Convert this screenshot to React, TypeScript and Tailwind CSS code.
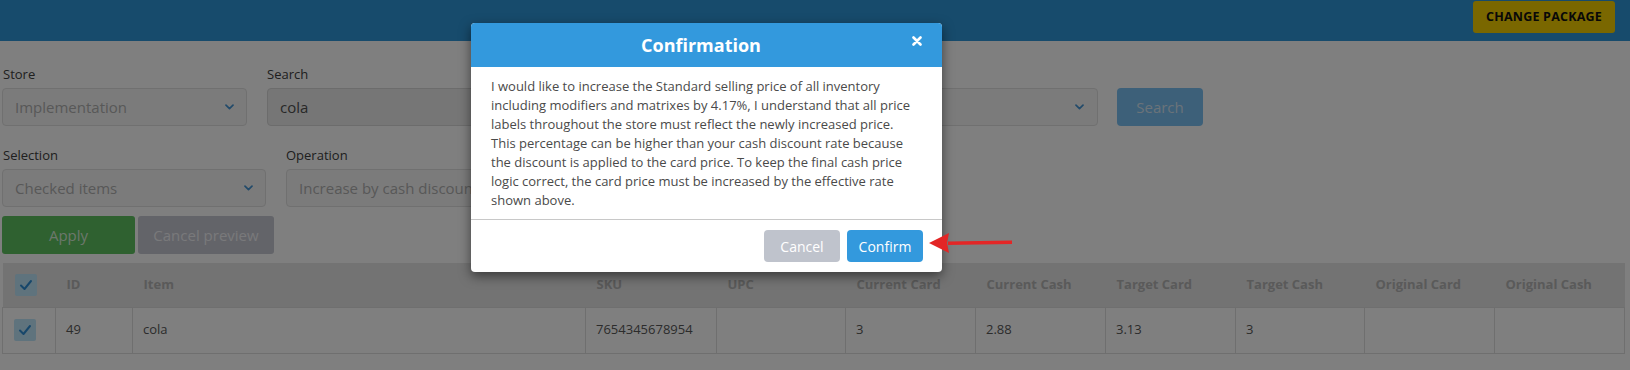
import React from "react";

const font = { fontFamily: '"Open Sans", "Noto Sans", sans-serif' };

function Chevron() {
  return (
    <svg width="9" height="6" viewBox="0 0 9 6" className="shrink-0">
      <path d="M1 1.2 L4.5 4.6 L8 1.2" fill="none" stroke="#4595d4" strokeWidth="1.7" strokeLinecap="round" strokeLinejoin="round" />
    </svg>
  );
}

function Check() {
  return (
    <span className="flex h-[22px] w-[22px] items-center justify-center rounded-[2px] bg-[#bfe6fa]">
      <svg width="14" height="12" viewBox="0 0 14 12">
        <path d="M2 6.5 L5.5 10 L12 2" fill="none" stroke="#2f8fd6" strokeWidth="2" strokeLinecap="round" strokeLinejoin="round" />
      </svg>
    </span>
  );
}

const cols = [53, 77, 453, 131, 129, 130, 130, 130, 129, 130, 130];
const heads = ["", "ID", "Item", "SKU", "UPC", "Current Card", "Current Cash", "Target Card", "Target Cash", "Original Card", "Original Cash"];
const row = ["", "49", "cola", "7654345678954", "", "3", "2.88", "3.13", "3", "", ""];

export default function App() {
  return (
    <div className="relative h-[370px] w-[1630px] overflow-hidden bg-white" style={font}>
      {/* top bar */}
      <div className="flex h-[41px] items-start justify-end bg-[#2e96d8] pr-[15px] pt-[1px]">
        <button className="h-[32px] w-[142px] rounded-[3px] bg-[#f4ce00] text-[12.5px] font-bold tracking-[0.2px] text-[#111]">
          CHANGE PACKAGE
        </button>
      </div>

      <div className="pl-[2px] pr-[6px] pt-[23px]">
        {/* row 1 */}
        <div className="flex items-end gap-[20px]">
          <div className="flex w-[245px] flex-col gap-[4px]">
            <label className="h-[20px] pl-[1px] text-[13px] leading-[20px] text-[#404040]">Store</label>
            <div className="flex h-[38px] items-center justify-between rounded-[4px] border border-[#e0e0e0] bg-[#f7f7f7] pl-[12px] pr-[12px]">
              <span className="text-[15px] text-[#b0b0b0]">Implementation</span>
              <Chevron />
            </div>
          </div>
          <div className="flex w-[420px] flex-col gap-[4px]">
            <label className="h-[20px] text-[13px] leading-[20px] text-[#404040]">Search</label>
            <div className="flex h-[38px] items-center rounded-[4px] border border-[#d8d8d8] bg-[#ececec] pl-[12px]">
              <span className="text-[15px] text-[#505050]">cola</span>
            </div>
          </div>
          <div className="flex w-[391px] flex-col">
            <div className="flex h-[38px] items-center justify-end rounded-[4px] border border-[#e0e0e0] bg-[#f7f7f7] pr-[13px]">
              <Chevron />
            </div>
          </div>
          <button className="ml-[-1px] h-[38px] w-[86px] rounded-[4px] bg-[#7ac0f2] text-[15px] text-[#d6e6f2]">Search</button>
        </div>

        {/* row 2 */}
        <div className="mt-[19px] flex items-end gap-[20px]">
          <div className="flex w-[264px] flex-col gap-[4px]">
            <label className="h-[20px] pl-[1px] text-[13px] leading-[20px] text-[#404040]">Selection</label>
            <div className="flex h-[38px] items-center justify-between rounded-[4px] border border-[#e0e0e0] bg-[#f7f7f7] pl-[12px] pr-[12px]">
              <span className="text-[15px] text-[#b0b0b0]">Checked items</span>
              <Chevron />
            </div>
          </div>
          <div className="flex w-[300px] flex-col gap-[4px]">
            <label className="h-[20px] text-[13px] leading-[20px] text-[#404040]">Operation</label>
            <div className="flex h-[38px] items-center overflow-hidden rounded-[4px] border border-[#e0e0e0] bg-[#f7f7f7] pl-[12px]">
              <span className="whitespace-nowrap text-[15px] text-[#b0b0b0]">Increase by cash discount rate</span>
            </div>
          </div>
        </div>

        {/* buttons */}
        <div className="mt-[9px] flex gap-[3px]">
          <button className="h-[38px] w-[133px] rounded-[3px] bg-[#5ec260] text-[15px] text-[#d8eed8]">Apply</button>
          <button className="h-[38px] w-[136px] rounded-[3px] bg-[#c6c8d2] text-[15px] text-[#f2f2f6]">Cancel preview</button>
        </div>

        {/* table */}
        <table className="mt-[9px] w-[1622px] table-fixed border-collapse text-[13px]">
          <colgroup>
            {cols.map((w, i) => (
              <col key={i} style={{ width: w }} />
            ))}
          </colgroup>
          <thead>
            <tr className="h-[44px] bg-[#e6e6e6]">
              {heads.map((h, i) => (
                <th key={i} className={`text-left font-bold text-[#b4b4b4] ${i === 0 ? "pl-[12px]" : "pl-[11px]"}`}>
                  {i === 0 ? <Check /> : h}
                </th>
              ))}
            </tr>
          </thead>
          <tbody>
            <tr className="h-[46px]">
              {row.map((c, i) => (
                <td key={i} className={`border border-[#dedede] text-left text-[#585858] ${i === 0 ? "pl-[11px]" : "pl-[10px]"}`}>
                  {i === 0 ? <Check /> : c}
                </td>
              ))}
            </tr>
          </tbody>
        </table>
      </div>

      {/* backdrop */}
      <div className="absolute inset-0 bg-black/50" />

      {/* modal */}
      <div className="absolute left-[471px] top-[23px] w-[471px] overflow-hidden rounded-[4px] bg-white shadow-[0_4px_12px_rgba(0,0,0,0.5)]">
        <div className="relative flex h-[44px] items-center justify-center bg-[#3399dd] pr-[11px]">
          <span className="text-[18px] font-bold text-white">Confirmation</span>
          <svg className="absolute right-[20px] top-[13px]" width="10" height="10" viewBox="0 0 10 10">
            <path d="M1.5 1.5 L8.5 8.5 M8.5 1.5 L1.5 8.5" stroke="white" strokeWidth="2.6" strokeLinecap="round" />
          </svg>
        </div>
        <div className="border-b border-[#c8c8c8] px-[20px] pb-[9px] pt-[10px] text-[13px] leading-[19px] text-[#4a4a4a]">
          I would like to increase the Standard selling price of all inventory<br />
          including modifiers and matrixes by 4.17%, I understand that all price<br />
          labels throughout the store must reflect the newly increased price.<br />
          This percentage can be higher than your cash discount rate because<br />
          the discount is applied to the card price. To keep the final cash price<br />
          logic correct, the card price must be increased by the effective rate<br />
          shown above.
        </div>
        <div className="flex justify-end gap-[7px] pb-[10px] pr-[19px] pt-[10px]">
          <button className="h-[32px] w-[76px] rounded-[4px] bg-[#bfc3cc] text-[14px] text-white">Cancel</button>
          <button className="h-[32px] w-[76px] rounded-[4px] bg-[#3399dd] text-[14px] text-white">Confirm</button>
        </div>
      </div>

      {/* red annotation arrow */}
      <svg className="absolute left-[928px] top-[232px]" width="86" height="22" viewBox="0 0 86 22">
        <path d="M20 9.5 L84 8.5 L84 12 L20 13 Z" fill="#e32626" />
        <path d="M1 11 L21 1 L19 11 L21 21 Z" fill="#e32626" />
      </svg>
    </div>
  );
}
